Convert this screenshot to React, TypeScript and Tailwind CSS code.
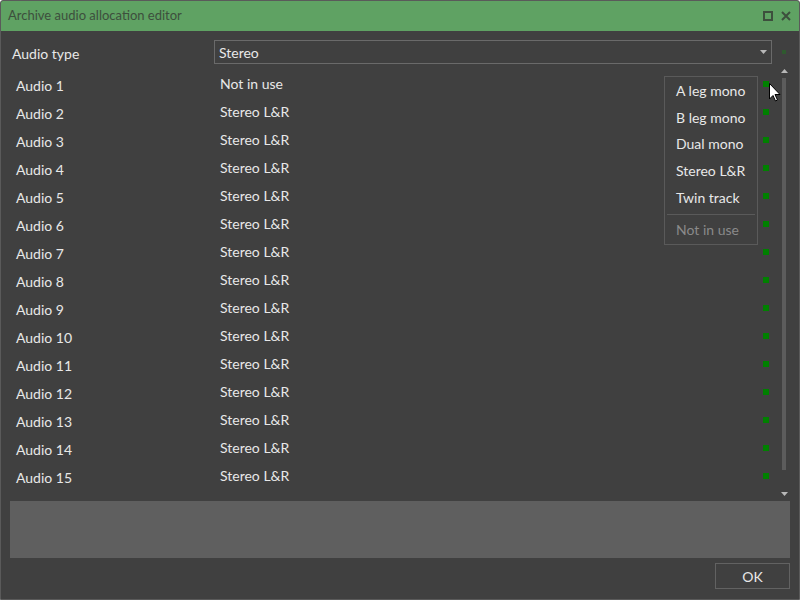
const font = { fontFamily: '"Segoe UI", Lato, "Noto Sans", sans-serif' };

const rows = Array.from({ length: 15 }, (_, i) => ({
  label: `Audio ${i + 1}`,
  value: i === 0 ? "Not in use" : "Stereo L&R",
}));

const menuItems = ["A leg mono", "B leg mono", "Dual mono", "Stereo L&R", "Twin track"];

export default function App() {
  return (
    <div
      className="relative w-[800px] h-[600px] flex flex-col bg-[#404040] border border-[#5a5a5a] rounded-t-[3px] overflow-hidden text-[#e8e8e8]"
      style={font}
    >
      {/* title bar */}
      <div className="h-[30px] shrink-0 flex items-center justify-between bg-[#5fa263] pl-[7px] pr-[8px]">
        <span className="text-[13px] text-[#3d4f3d]">Archive audio allocation editor</span>
        <div className="flex items-center gap-[8px]">
          <div className="w-[10px] h-[10px] border-2 border-[#3d4f3d]" />
          <svg width="10" height="10" viewBox="0 0 10 10">
            <path d="M1 1L9 9M9 1L1 9" stroke="#3d4f3d" strokeWidth="2" />
          </svg>
        </div>
      </div>

      {/* audio type */}
      <div className="flex items-center mt-[9px] h-[24px] pl-[11px]">
        <span className="w-[202px] text-[14px] pt-[3px]">Audio type</span>
        <div className="w-[558px] h-[24px] flex items-center justify-between border border-[#6a6a6a] pl-[4px] pr-[4px]">
          <span className="text-[14px]">Stereo</span>
          <svg width="7" height="5" viewBox="0 0 7 5">
            <path d="M0 0H7L3.5 4Z" fill="#b8b8b8" />
          </svg>
        </div>
        <div className="ml-[10px] w-[4px] h-[4px] bg-[#2f5a2f]" />
      </div>

      {/* list */}
      <div className="flex mt-[8px]">
        <div className="flex flex-col w-[770px]">
          {rows.map((r) => (
            <div key={r.label} className="relative h-[28px] flex text-[14px]">
              <span className="w-[219px] pl-[15px] pt-[3px]">{r.label}</span>
              <span className="pt-[1px]">{r.value}</span>
              <div className="absolute left-[762px] top-[9px] w-[6px] h-[6px] bg-[#008000]" />
            </div>
          ))}
        </div>
        <div className="ml-[10px] w-[6px] flex flex-col items-center">
          <svg width="7" height="4" viewBox="0 0 7 4" className="mt-[-3px]">
            <path d="M0 4H7L3.5 0Z" fill="#b8b8b8" />
          </svg>
          <div className="mt-[5px] w-[4px] h-[392px] bg-[#5c5c5c]" />
          <svg width="7" height="4" viewBox="0 0 7 4" className="mt-[22px]">
            <path d="M0 0H7L3.5 4Z" fill="#b8b8b8" />
          </svg>
        </div>
      </div>

      {/* notes area */}
      <div className="mx-[9px] mt-[5px] h-[57px] bg-[#5f5f5f]" />

      {/* footer */}
      <div className="flex justify-end pr-[9px] mt-[5px]">
        <button className="w-[75px] h-[26px] border border-[#626262] text-[14px] text-[#e8e8e8]">OK</button>
      </div>

      {/* dropdown popup */}
      <div className="absolute left-[663px] top-[75px] w-[94px] flex flex-col bg-[#404040] border border-[#5a5a5a] text-[14px]">
        <div className="flex flex-col">
          {menuItems.map((m) => (
            <div key={m} className="h-[26.7px] flex items-center pl-[11px]">
              {m}
            </div>
          ))}
        </div>
        <div className="mx-[2px] mt-[4px] h-px bg-[#5a5a5a]" />
        <div className="h-[29px] flex items-center pl-[11px] text-[#8a8a8a]">Not in use</div>
      </div>

      {/* mouse cursor */}
      <svg className="absolute left-[768px] top-[82px]" width="12" height="19" viewBox="0 0 12 19">
        <path d="M0.5 0.5V16L4 12.5L6.5 18L8.5 17L6 11.5H11Z" fill="#fff" stroke="#000" strokeWidth="1" />
      </svg>
    </div>
  );
}
